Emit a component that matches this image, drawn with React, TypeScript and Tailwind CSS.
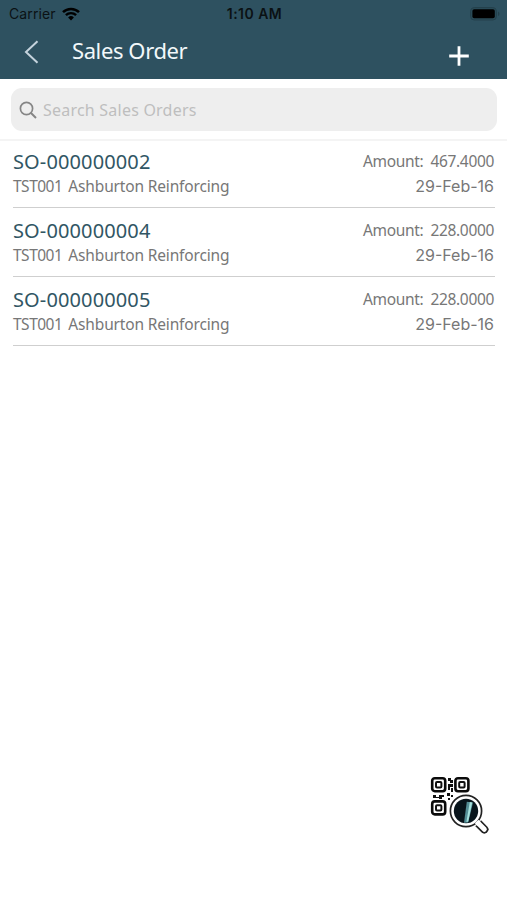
import { useState } from "react";

interface ISalesOrder {
  id: string;
  customerCode: string;
  customerName: string;
  amount: string;
  date: string;
}

const orders: ISalesOrder[] = [
  {
    id: "SO-000000002",
    customerCode: "TST001",
    customerName: "Ashburton Reinforcing",
    amount: "467.4000",
    date: "29-Feb-16",
  },
  {
    id: "SO-000000004",
    customerCode: "TST001",
    customerName: "Ashburton Reinforcing",
    amount: "228.0000",
    date: "29-Feb-16",
  },
  {
    id: "SO-000000005",
    customerCode: "TST001",
    customerName: "Ashburton Reinforcing",
    amount: "228.0000",
    date: "29-Feb-16",
  },
];

const StatusBar = () => (
  <div className="h-[27px] grid grid-cols-3 items-center pl-[9px] pr-[7px] font-['Inter',sans-serif] text-[14px] leading-none text-[#0b1114]">
    <div className="flex items-center gap-[6px]">
      <span className="tracking-[0.1px]">Carrier</span>
      <svg width="18" height="14" viewBox="0 0 18 14" fill="none">
        <path d="M1 5.2A11.3 11.3 0 0 1 17 5.2" stroke="#000" strokeWidth="2.5" />
        <path d="M3.9 8.2A7.2 7.2 0 0 1 14.1 8.2" stroke="#000" strokeWidth="2.4" />
        <path d="M9 13.4L6.1 10.5A4.1 4.1 0 0 1 11.9 10.5Z" fill="#000" />
      </svg>
    </div>
    <span className="text-center font-semibold tracking-[0.45px] whitespace-nowrap">
      1:10 AM
    </span>
    <svg className="justify-self-end" width="30" height="14" viewBox="0 0 30 14">
      <rect x="0.6" y="0.6" width="25.8" height="12.4" rx="3.6" fill="#2b4c59" stroke="#24414c" />
      <rect x="2.4" y="2.3" width="22.4" height="9" rx="1.8" fill="#000" />
      <path d="M28 4.5C30 5.4 30 8.2 28 9.1Z" fill="#24414c" />
    </svg>
  </div>
);

const Header = () => (
  <header className="h-[79px] bg-[#2e5160]">
    <StatusBar />
    <div className="h-[50px] flex items-center pl-[24px] pr-[37px]">
      <button aria-label="Back">
        <svg width="16" height="24" viewBox="0 0 16 24" fill="none">
          <path d="M13.5 1.2L2 12L13.5 22.8" stroke="#c5d3dd" strokeWidth="2" />
        </svg>
      </button>
      <h1 className="ml-[32px] -mt-[5px] text-[22px] leading-[30px] tracking-[-0.4px] text-[#f2f8fa]">
        Sales Order
      </h1>
      <button aria-label="Add" className="ml-auto mt-[7px]">
        <svg width="22" height="22" viewBox="0 0 22 22" fill="none">
          <path d="M11 1.2V20.8M1.2 11H20.8" stroke="#fff" strokeWidth="2.8" />
        </svg>
      </button>
    </div>
  </header>
);

const OrderRow = ({ order }: { order: ISalesOrder }) => (
  <li className="h-[69px] border-b border-[#cfcfcf] flex justify-between text-[#777]">
    <div className="pt-[9px]">
      <div className="text-[20px] leading-[27px] tracking-[0.12px] text-[#315664]">
        {order.id}
      </div>
      <div className="text-[15.5px] leading-[22px] flex gap-[6px]">
        <span className="tracking-[-0.5px]">{order.customerCode}</span>
        <span className="tracking-[-0.16px]">{order.customerName}</span>
      </div>
    </div>
    <div className="pt-[10px] pr-px text-right">
      <div className="text-[15.5px] leading-[24px] tracking-[-0.33px] flex justify-end gap-[7px]">
        <span>Amount:</span>
        <span>{order.amount}</span>
      </div>
      <div className="mt-px font-['Inter',sans-serif] text-[16px] leading-[25px]">
        {order.date}
      </div>
    </div>
  </li>
);

const ScanIcon = () => (
  <svg width="60" height="60" viewBox="0 0 60 60" fill="none">
    <g stroke="#0a0a0a" strokeWidth="2.6">
      <rect x="2.2" y="2.2" width="13" height="13" rx="2.6" />
      <rect x="25.4" y="2.2" width="13" height="13" rx="2.6" />
      <rect x="2.2" y="25.4" width="13" height="13" rx="2.6" />
    </g>
    <g stroke="#111" strokeWidth="2">
      <rect x="6" y="6" width="5.4" height="5.4" rx="1" />
      <rect x="29.2" y="6" width="5.4" height="5.4" rx="1" />
      <rect x="6" y="29.2" width="5.4" height="5.4" rx="1" />
    </g>
    <path
      d="M18 2h3v3h-3zM20 4h3v3h-3zM18 8h5v3h-3v3h-2zM21 12h2v4h-2zM3 19h3v2h3v-2h5v2h-2v2H9v-1H3zM17 17h3v3h-3zM21 19h2v2h-2zM18 22h2v2h-2z"
      fill="#111"
    />
    <path d="M46 45L54.3 53.3" stroke="#222" strokeWidth="8.2" strokeLinecap="round" />
    <path d="M46 45L54.3 53.3" stroke="#fff" strokeWidth="5" strokeLinecap="round" />
    <circle cx="36" cy="35" r="17.6" fill="#fff" />
    <circle cx="36" cy="35" r="15.6" fill="#fff" stroke="#222" strokeWidth="1.7" />
    <path d="M46.6 45.6L49 48" stroke="#fff" strokeWidth="5" />
    <circle cx="36" cy="35" r="12.2" fill="#08141b" />
    <path d="M36.8 25.8L43 26.5L38.2 46.4L34 46.8Z" fill="#548e96" />
    <path d="M39.8 26L42.2 26.4L38.2 45.4L36.4 46Z" fill="#a6e0dc" />
  </svg>
);

export default function App() {
  const [searchTerm, setSearchTerm] = useState("");

  const filteredOrders = orders.filter((order) =>
    order.id.toLowerCase().includes(searchTerm.toLowerCase())
  );

  return (
    <div className="relative w-full h-[900px] bg-white overflow-hidden font-['Noto_Sans',sans-serif]">
      <Header />
      <div className="h-[60px] pt-[9px] pl-[11px] pr-[10px]">
        <div className="h-[43px] rounded-[11px] bg-[#eee] flex items-center pl-[8px] gap-[6px]">
          <svg width="18" height="18" viewBox="0 0 18 18" fill="none" stroke="#858585" strokeWidth="1.7">
            <circle cx="7.5" cy="7.5" r="6.1" />
            <path d="M12 12L17 17" strokeWidth="2" />
          </svg>
          <input
            type="text"
            placeholder="Search Sales Orders"
            className="flex-1 bg-transparent text-[16px] tracking-[0.22px] text-[#777] focus:outline-none placeholder:text-[#bebebe]"
            value={searchTerm}
            onChange={(e) => setSearchTerm(e.target.value)}
          />
        </div>
      </div>
      <ul className="pl-[13px] pr-[12px] shadow-[inset_0_2px_0_#f4f4f4]">
        {filteredOrders.map((order) => (
          <OrderRow key={order.id} order={order} />
        ))}
      </ul>
      <button aria-label="Scan" className="absolute left-[430px] top-[776px]">
        <ScanIcon />
      </button>
    </div>
  );
}
